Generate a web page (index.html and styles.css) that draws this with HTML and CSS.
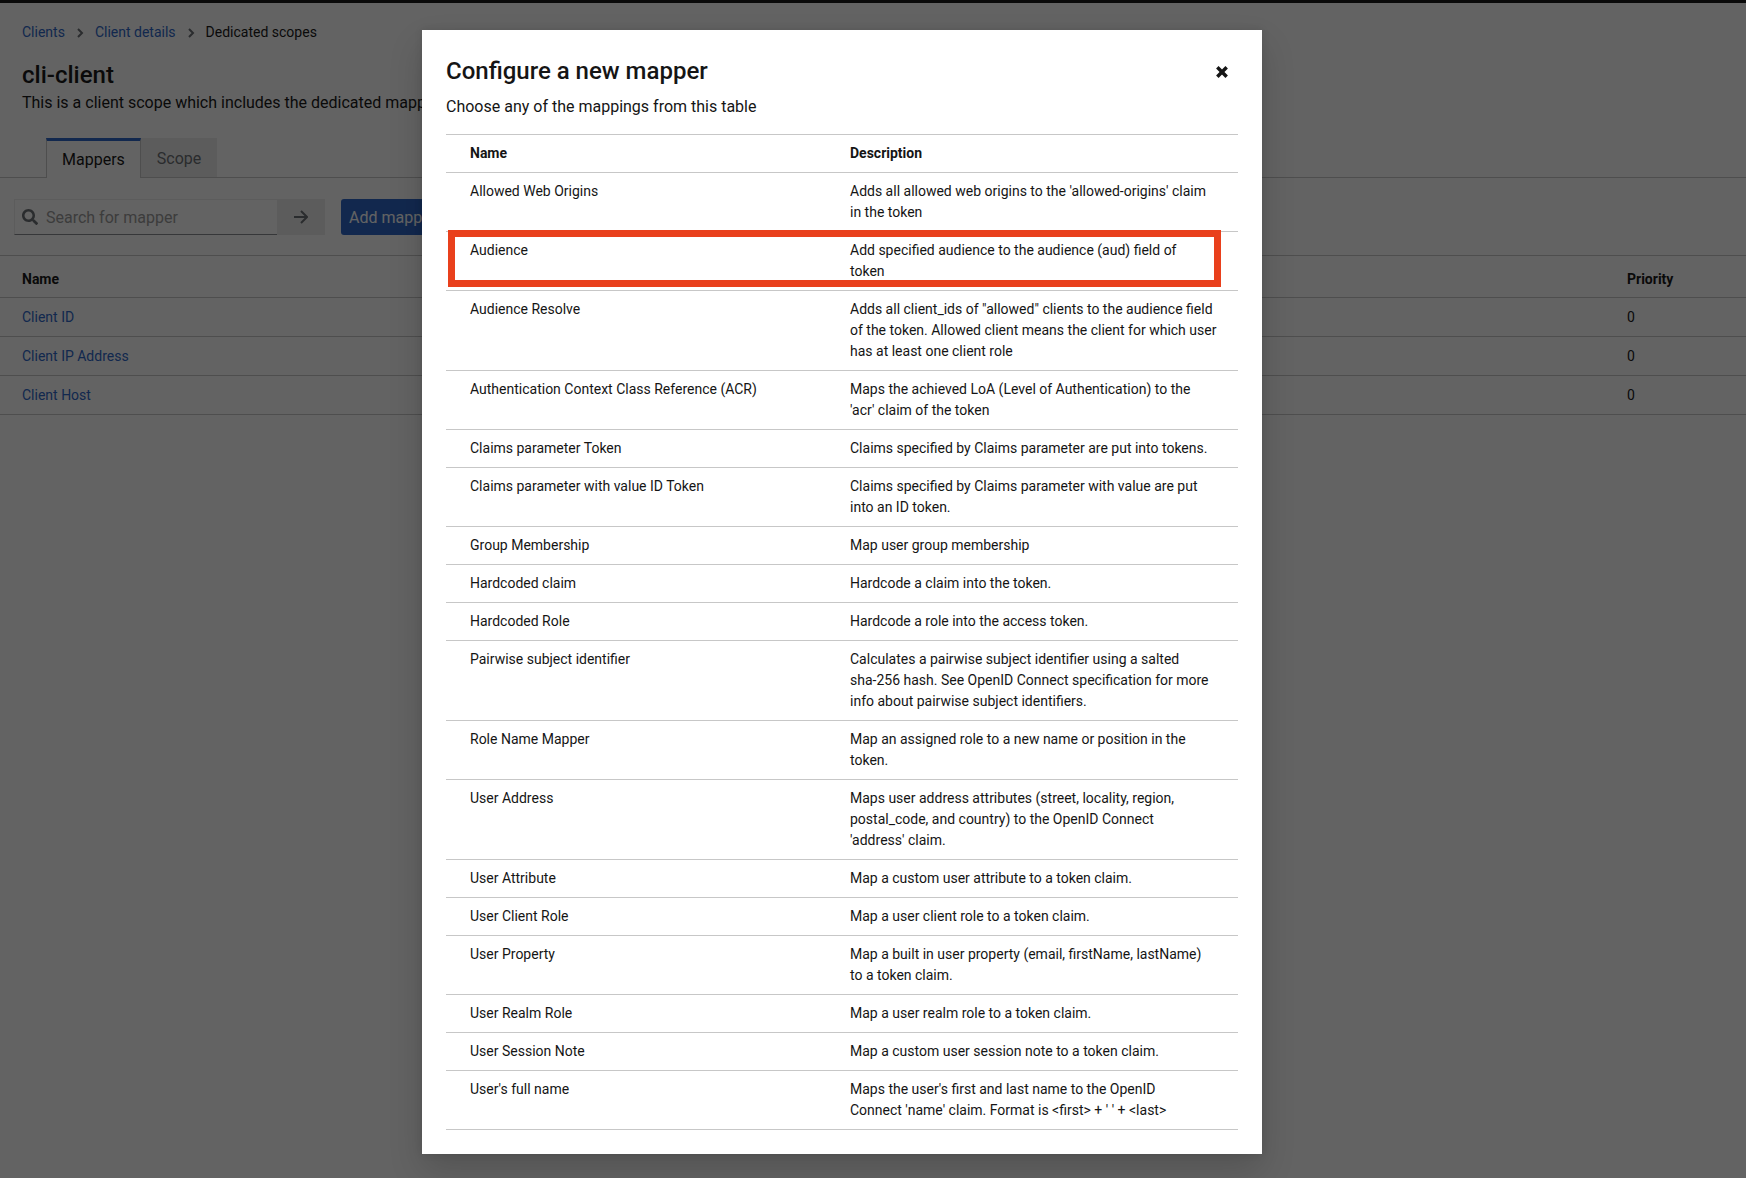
FILE: index.html
```html
<!DOCTYPE html>
<html lang="en">
<head>
<meta charset="utf-8">
<meta name="viewport" content="width=device-width, initial-scale=1">
<title>Dedicated scopes</title>
<link rel="stylesheet" href="styles.css">
</head>
<body>
<div class="masthead"></div>
<main class="page">
  <nav class="breadcrumb" aria-label="Breadcrumb">
    <a href="#clients">Clients</a>
    <svg class="chevron" viewBox="0 0 8 12" aria-hidden="true"><path d="M2 2l4 4-4 4"/></svg>
    <a href="#details">Client details</a>
    <svg class="chevron" viewBox="0 0 8 12" aria-hidden="true"><path d="M2 2l4 4-4 4"/></svg>
    <span>Dedicated scopes</span>
  </nav>
  <h1 class="page-title">cli-client</h1>
  <p class="page-text">This is a client scope which includes the dedicated mappers and scope</p>
  <div class="tabs">
    <button class="tab tab-current" type="button">Mappers</button>
    <button class="tab" type="button">Scope</button>
  </div>
  <div class="toolbar">
    <div class="search">
      <svg class="search-icon" viewBox="0 0 512 512" aria-hidden="true"><path d="M505 442.7L405.3 343c-4.5-4.5-10.6-7-17-7H372c27.600-35.300 44-79.700 44-128C416 93.100 322.900 0 208 0S0 93.100 0 208s93.100 208 208 208c48.300 0 92.700-16.400 128-44v16.300c0 6.400 2.500 12.500 7 17l99.700 99.700c9.400 9.400 24.600 9.400 33.900 0l28.300-28.300c9.400-9.400 9.400-24.600.1-34zM208 336c-70.700 0-128-57.200-128-128 0-70.700 57.200-128 128-128 70.700 0 128 57.200 128 128 0 70.700-57.200 128-128 128z"/></svg>
      <input class="search-input" type="text" aria-label="Search for mapper" placeholder="Search for mapper">
      <button class="search-go" type="button" aria-label="Search"><svg viewBox="0 0 14 14" aria-hidden="true"><path d="M0 7h12.500M7 1l6 6-6 6"/></svg></button>
    </div>
    <button class="add" type="button">Add mapper</button>
  </div>
  <table class="mappers">
    <thead><tr><th>Name</th><th class="priority">Priority</th></tr></thead>
    <tbody>
      <tr><td><a href="#id">Client ID</a></td><td>0</td></tr>
      <tr><td><a href="#ip">Client IP Address</a></td><td>0</td></tr>
      <tr><td><a href="#host">Client Host</a></td><td>0</td></tr>
    </tbody>
  </table>
</main>
<div class="backdrop">
  <section class="modal" role="dialog" aria-modal="true" aria-labelledby="modal-title">
    <header class="modal-header">
      <h2 class="modal-title" id="modal-title">Configure a new mapper</h2>
      <button class="close" type="button" aria-label="Close"><svg viewBox="0 0 12 12" aria-hidden="true"><path d="M2 2l8 8M10 2l-8 8"/></svg></button>
    </header>
    <p class="modal-text">Choose any of the mappings from this table</p>
    <table class="choices">
      <thead><tr><th>Name</th><th>Description</th></tr></thead>
      <tbody>
        <tr><td>Allowed Web Origins</td><td>Adds all allowed web origins to the 'allowed-origins' claim<br>in the token</td></tr>
        <tr class="marked"><td>Audience</td><td>Add specified audience to the audience (aud) field of<br>token</td></tr>
        <tr><td>Audience Resolve</td><td>Adds all client_ids of "allowed" clients to the audience field<br>of the token. Allowed client means the client for which user<br>has at least one client role</td></tr>
        <tr><td>Authentication Context Class Reference (ACR)</td><td>Maps the achieved LoA (Level of Authentication) to the<br>'acr' claim of the token</td></tr>
        <tr><td>Claims parameter Token</td><td>Claims specified by Claims parameter are put into tokens.</td></tr>
        <tr><td>Claims parameter with value ID Token</td><td>Claims specified by Claims parameter with value are put<br>into an ID token.</td></tr>
        <tr><td>Group Membership</td><td>Map user group membership</td></tr>
        <tr><td>Hardcoded claim</td><td>Hardcode a claim into the token.</td></tr>
        <tr><td>Hardcoded Role</td><td>Hardcode a role into the access token.</td></tr>
        <tr><td>Pairwise subject identifier</td><td>Calculates a pairwise subject identifier using a salted<br>sha-256 hash. See OpenID Connect specification for more<br>info about pairwise subject identifiers.</td></tr>
        <tr><td>Role Name Mapper</td><td>Map an assigned role to a new name or position in the<br>token.</td></tr>
        <tr><td>User Address</td><td>Maps user address attributes (street, locality, region,<br>postal_code, and country) to the OpenID Connect<br>'address' claim.</td></tr>
        <tr><td>User Attribute</td><td>Map a custom user attribute to a token claim.</td></tr>
        <tr><td>User Client Role</td><td>Map a user client role to a token claim.</td></tr>
        <tr><td>User Property</td><td>Map a built in user property (email, firstName, lastName)<br>to a token claim.</td></tr>
        <tr><td>User Realm Role</td><td>Map a user realm role to a token claim.</td></tr>
        <tr><td>User Session Note</td><td>Map a custom user session note to a token claim.</td></tr>
        <tr><td>User's full name</td><td>Maps the user's first and last name to the OpenID<br>Connect 'name' claim. Format is &lt;first&gt; + ' ' + &lt;last&gt;</td></tr>
      </tbody>
    </table>
  </section>
</div>
</body>
</html>
```
FILE: styles.css
```css
* { box-sizing: border-box; }
body {
  margin: 0;
  background: #fff;
  color: #151515;
  font: 14px/21px Roboto, sans-serif;
}
h1, h2, p { margin: 0; }
button, input { font: inherit; color: inherit; border: 0; }
a { color: #2b65c8; text-decoration: none; }
table { width: 100%; border-collapse: separate; border-spacing: 0; table-layout: fixed; }
th, td {
  padding: 8px 20px 8px 8px;
  border-bottom: 1px solid #c7c7c7;
  text-align: left;
  vertical-align: top;
}
th:first-child, td:first-child { padding-left: 24px; }
th { font-weight: 700; }

.masthead { height: 3px; background: #151515; }
.breadcrumb { display: flex; align-items: center; gap: 11px; padding: 19px 22px 0; }
.chevron { width: 8px; height: 12px; fill: none; stroke: #6a6e73; stroke-width: 2; }
.page-title { padding: 16px 22px 0; font-size: 24px; line-height: 32px; font-weight: 500; }
.page-text { padding: 0 22px; font-size: 16px; line-height: 24px; }
.tabs {
  display: flex;
  margin-top: 23px;
  padding-left: 46px;
  border-bottom: 1px solid #c7c7c7;
}
.tab {
  height: 39px;
  padding: 2px 16px 0;
  background: #ededed;
  color: #6a6e73;
  font-size: 16px;
}
.tab-current {
  height: 40px;
  margin-bottom: -1px;
  padding: 0 15px;
  background: #fff;
  color: #151515;
  border: 1px solid #c7c7c7;
  border-top: 3px solid #2b65c8;
  border-bottom: 0;
}
.toolbar { display: flex; gap: 16px; padding: 21px 14px 20px; font-size: 16px; }
.search { position: relative; display: flex; height: 36px; }
.search-icon { position: absolute; left: 8px; top: 10px; width: 16px; height: 16px; fill: #6a6e73; }
.search-input {
  width: 263px;
  padding: 0 8px 0 31px;
  background: transparent;
  border: 1px solid #ededed;
  border-right: 0;
  border-bottom-color: #8a8d90;
}
.search-input::placeholder { color: #9a9a9a; opacity: 1; }
.search-go { display: grid; place-items: center; width: 48px; padding: 0; background: #ededed; }
.search-go svg { width: 14px; height: 14px; fill: none; stroke: #6a6e73; stroke-width: 2; }
.add { height: 36px; padding: 0 8px; border-radius: 3px; background: #2b65c8; color: #fff; }
.mappers { border-top: 1px solid #c7c7c7; }
.mappers th { padding-top: 13px; padding-bottom: 7px; }
.mappers th:first-child, .mappers td:first-child { padding-left: 22px; }
.mappers td { padding-top: 9px; }
.priority { width: 127px; }

.backdrop {
  position: absolute;
  inset: 0;
  display: flex;
  justify-content: center;
  align-items: flex-start;
  padding: 30px 62px 24px 0;
  background: rgba(3, 3, 3, .62);
}
.modal {
  width: 840px;
  padding: 24px;
  background: #fff;
  box-shadow: 0 16px 32px rgba(3, 3, 3, .16), 0 0 8px rgba(3, 3, 3, .1);
}
.modal-header { display: flex; justify-content: space-between; align-items: flex-start; }
.modal-title { font-size: 24px; line-height: 34px; font-weight: 500; }
.close { display: grid; place-items: center; width: 32px; height: 36px; padding: 0; background: transparent; }
.close svg { width: 14px; height: 14px; fill: none; stroke: #151515; stroke-width: 3; }
.modal-text { padding: 5px 0 15px; font-size: 16px; line-height: 24px; }
.choices { border-top: 1px solid #c7c7c7; }
.marked { position: relative; }
.marked td:first-child::after {
  content: "";
  position: absolute;
  inset: -2px 17px 4px 2px;
  border: 7px solid #e9401c;
}
```
